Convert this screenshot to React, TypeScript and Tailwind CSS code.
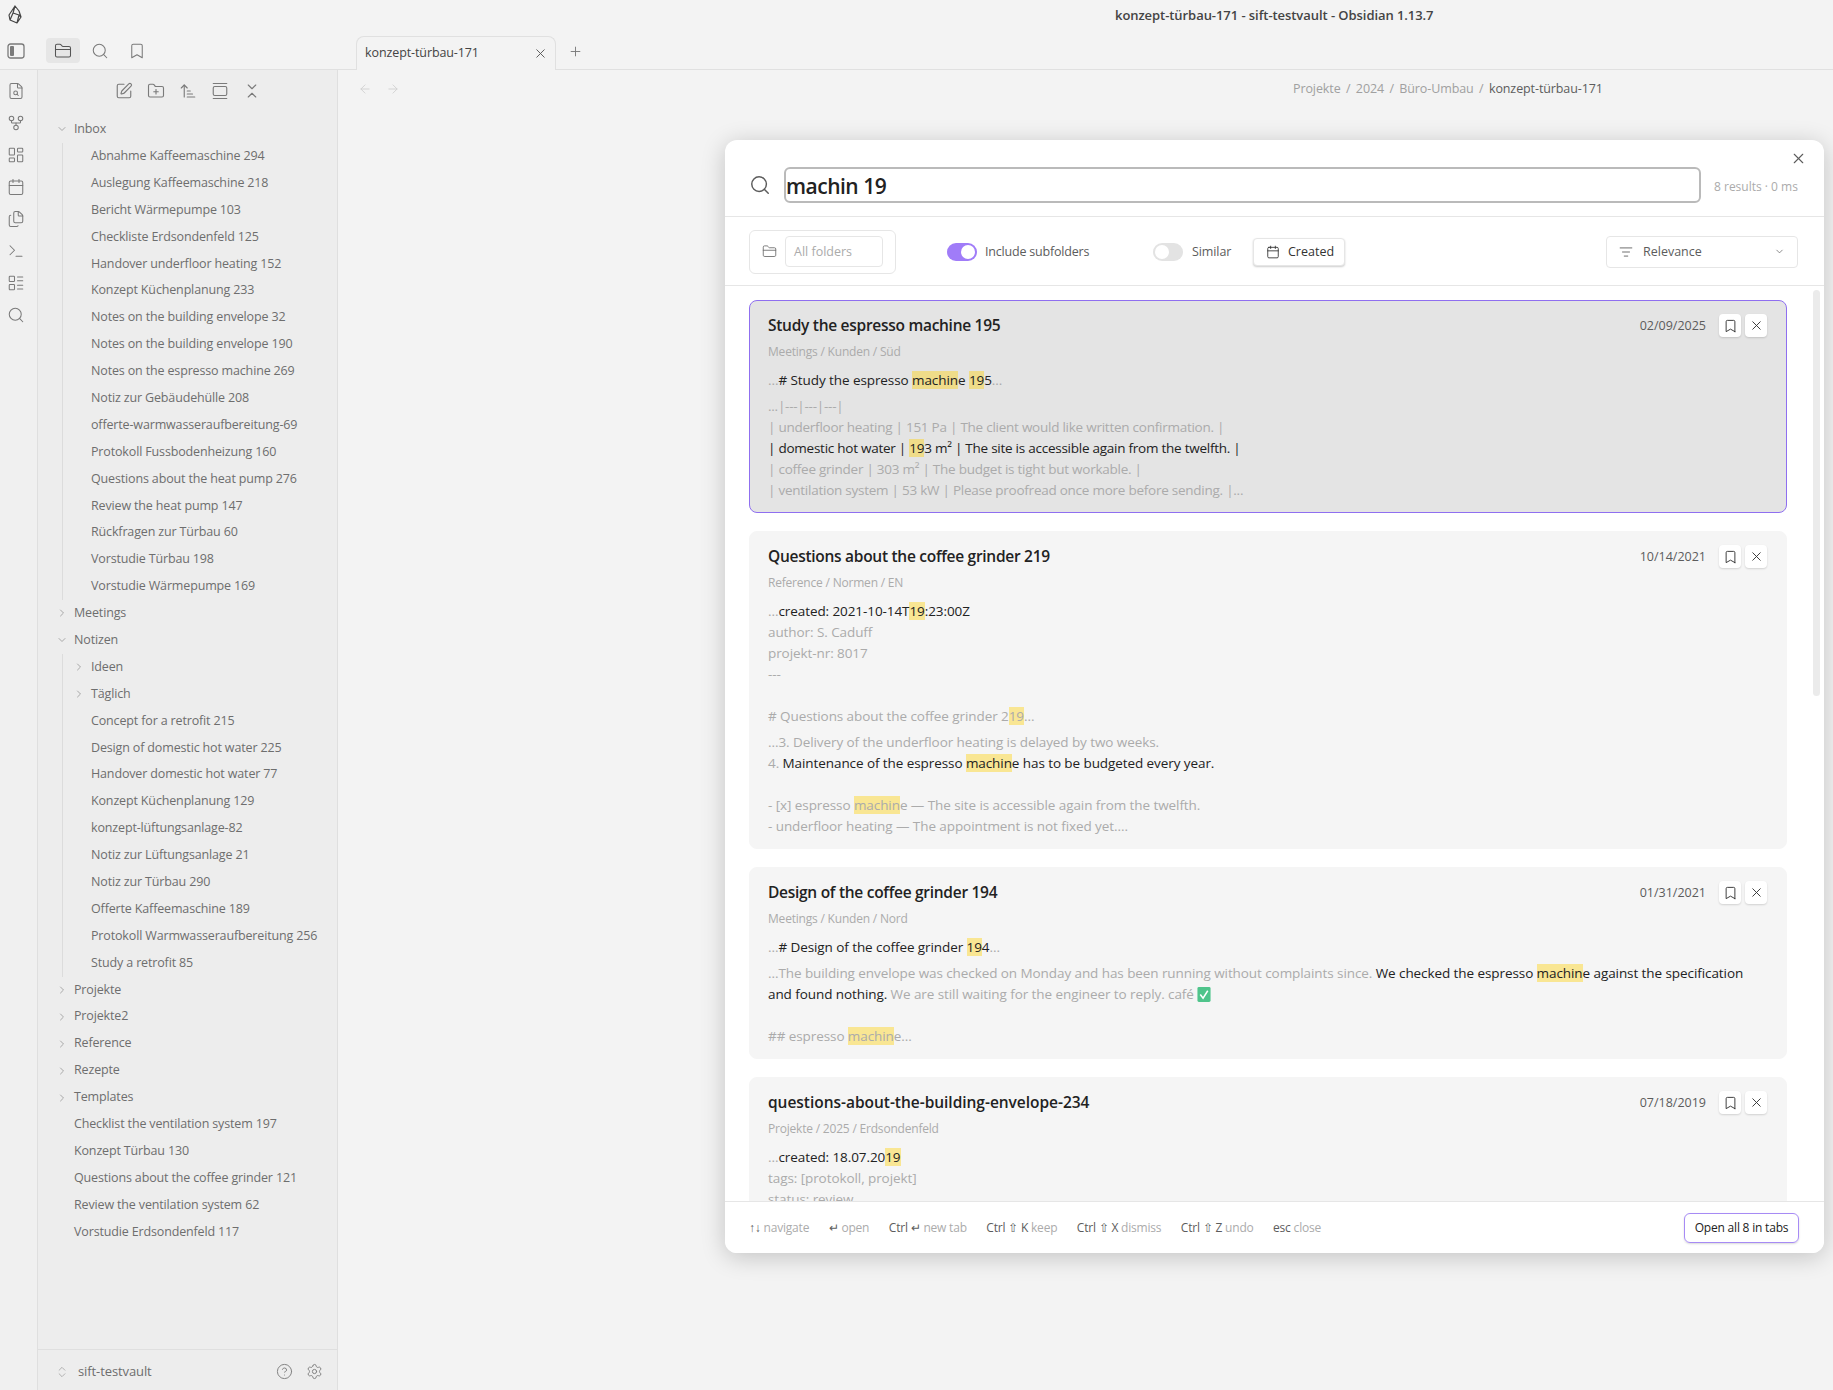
import {
  ArrowLeft, ArrowRight, ArrowUpNarrowWide, Bookmark, Calendar, ChevronDown, ChevronRight, ChevronsDownUp,
  ChevronsUpDown, CircleHelp, FileSearch, Files, FolderClosed, FolderPlus, GalleryVertical, GitFork,
  LayoutDashboard, LayoutList, ListFilter, Plus, Search, Settings, SquarePen, Terminal, X,
} from "lucide-react";
import type { ReactNode } from "react";

const font = { fontFamily: '"Open Sans", "Noto Sans", sans-serif' };

function Folder({ name, open, nested }: { name: string; open?: boolean; nested?: boolean }) {
  const Icon = open ? ChevronDown : ChevronRight;
  return (
    <div className={`flex items-center h-[26.9px] text-[12.5px] tracking-[-0.15px] text-[#6e6e6e] ${nested ? "pl-[35px]" : "pl-[18px]"}`}>
      <Icon className="w-3 h-3 text-[#a8a8a8] mr-[6px] shrink-0" strokeWidth={2} />
      <span>{name}</span>
    </div>
  );
}

function Note({ name, top }: { name: string; top?: boolean }) {
  return (
    <div className={`flex items-center h-[26.9px] text-[12.5px] tracking-[-0.15px] text-[#6e6e6e] whitespace-nowrap ${top ? "pl-[36px]" : "pl-[53px]"}`}>
      {name}
    </div>
  );
}

const inbox = [
  "Abnahme Kaffeemaschine 294", "Auslegung Kaffeemaschine 218", "Bericht Wärmepumpe 103", "Checkliste Erdsondenfeld 125",
  "Handover underfloor heating 152", "Konzept Küchenplanung 233", "Notes on the building envelope 32",
  "Notes on the building envelope 190", "Notes on the espresso machine 269", "Notiz zur Gebäudehülle 208",
  "offerte-warmwasseraufbereitung-69", "Protokoll Fussbodenheizung 160", "Questions about the heat pump 276",
  "Review the heat pump 147", "Rückfragen zur Türbau 60", "Vorstudie Türbau 198", "Vorstudie Wärmepumpe 169",
];
const notizen = [
  "Concept for a retrofit 215", "Design of domestic hot water 225", "Handover domestic hot water 77", "Konzept Küchenplanung 129",
  "konzept-lüftungsanlage-82", "Notiz zur Lüftungsanlage 21", "Notiz zur Türbau 290", "Offerte Kaffeemaschine 189",
  "Protokoll Warmwasseraufbereitung 256", "Study a retrofit 85",
];

function Sidebar() {
  return (
    <div className="w-[300px] shrink-0 flex flex-col bg-[#ededed] border-r border-[#dfdfdf]">
      <div className="h-[46px] pb-[5px] flex items-center justify-center gap-[14px] text-[#7a7a7a]">
        <SquarePen className="w-[18px] h-[18px]" strokeWidth={1.5} />
        <FolderPlus className="w-[18px] h-[18px]" strokeWidth={1.5} />
        <ArrowUpNarrowWide className="w-[18px] h-[18px]" strokeWidth={1.5} />
        <GalleryVertical className="w-[18px] h-[18px]" strokeWidth={1.5} />
        <ChevronsDownUp className="w-[18px] h-[18px]" strokeWidth={1.5} />
      </div>
      <div className="flex-1 relative">
        <Folder name="Inbox" open />
        <div className="ml-[24px] border-l border-[#dcdcdc]">
          {inbox.map((n) => (
            <div key={n} className="-ml-[25px]"><Note name={n} /></div>
          ))}
        </div>
        <Folder name="Meetings" />
        <Folder name="Notizen" open />
        <div className="ml-[24px] border-l border-[#dcdcdc]">
          <div className="-ml-[25px]">
            <Folder name="Ideen" nested />
            <Folder name="Täglich" nested />
            {notizen.map((n) => <Note key={n} name={n} />)}
          </div>
        </div>
        {["Projekte", "Projekte2", "Reference", "Rezepte", "Templates"].map((n) => <Folder key={n} name={n} />)}
        {["Checklist the ventilation system 197", "Konzept Türbau 130", "Questions about the coffee grinder 121", "Review the ventilation system 62", "Vorstudie Erdsondenfeld 117"].map((n) => (
          <Note key={n} name={n} top />
        ))}
      </div>
      <div className="h-[41px] pt-[3px] border-t border-[#dfdfdf] flex items-center pl-[17px] pr-[14px] text-[#6e6e6e]">
        <ChevronsUpDown className="w-[14px] h-[14px] text-[#a8a8a8] mr-[9px]" strokeWidth={1.5} />
        <span className="text-[13px] flex-1 tracking-[-0.1px]">sift-testvault</span>
        <CircleHelp className="w-[17px] h-[17px] text-[#828282] mr-[13px]" strokeWidth={1.4} />
        <Settings className="w-[17px] h-[17px] text-[#828282]" strokeWidth={1.4} />
      </div>
    </div>
  );
}

function Ribbon() {
  const icons = [FileSearch, GitFork, LayoutDashboard, Calendar, Files, Terminal, LayoutList, Search];
  return (
    <div className="w-[38px] shrink-0 flex flex-col items-start gap-[14px] pt-[12px] pl-[7px] bg-[#f0f0f0] border-r border-[#dfdfdf] text-[#7a7a7a]">
      {icons.map((Icon, i) => (
        <Icon key={i} className="w-[18px] h-[18px]" strokeWidth={1.4} />
      ))}
    </div>
  );
}

const M = ({ children }: { children: ReactNode }) => <mark className="bg-[#ffd00066] text-inherit">{children}</mark>;
const D = ({ children }: { children: ReactNode }) => <span className="text-[#222222]">{children}</span>;

function Card({ title, path, date, active, children }: { title: ReactNode; path: string; date: string; active?: boolean; children: ReactNode }) {
  return (
    <div className={`shrink-0 rounded-lg pl-[18px] pr-[19px] border ${active ? "bg-[#e4e4e4] border-[#8f6ff0] pt-[13px] h-[213px]" : "bg-[#f5f5f5] border-[#f5f5f5] pt-[13px] pb-[6px]"}`}>
      <div className="flex items-center h-[24px]">
        <div className="flex-1 text-[15.5px] font-semibold text-[#222222] tracking-[-0.28px]">{title}</div>
        <div className="text-[12.5px] text-[#5c5c5c] mr-[13px] mt-[1px]">{date}</div>
        <div className="w-[22px] h-[23px] -mt-[1px] bg-white rounded shadow-[0_1px_2px_rgba(0,0,0,0.15)] flex items-center justify-center mr-[4px]">
          <Bookmark className="w-[15px] h-[16px] text-[#333333]" strokeWidth={1.5} />
        </div>
        <div className="w-[22px] h-[23px] -mt-[1px] bg-white rounded shadow-[0_1px_2px_rgba(0,0,0,0.15)] flex items-center justify-center">
          <X className="w-[15px] h-[15px] text-[#333333]" strokeWidth={1.5} />
        </div>
      </div>
      <div className="text-[12px] text-[#ababab] h-[17px] leading-[17px] mt-[5px] tracking-[-0.2px]">{path}</div>
      <div className="mt-[10px] text-[13.5px] leading-[21px] text-[#ababab] tracking-[-0.08px]">{children}</div>
    </div>
  );
}

const Para = ({ children }: { children: ReactNode }) => <div className="mb-[5px] whitespace-pre-wrap">{children}</div>;

function Results() {
  return (
    <div className="flex-1 min-h-0 relative overflow-hidden pl-[24px] pt-[14px] flex flex-col gap-[18px] pr-[37px]">
      <Card title="Study the espresso machine 195" path="Meetings / Kunden / Süd" date="02/09/2025" active>
        <Para><span>...</span><D># Study the espresso <M>machin</M>e <M>19</M>5</D>...</Para>
        <div className="tracking-[-0.25px]">
          <Para>...|---|---|---|{"\n"}| underfloor heating | 151 Pa | The client would like written confirmation. |{"\n"}<D>| domestic hot water | <M>19</M>3 m² | The site is accessible again from the twelfth. |</D>{"\n"}| coffee grinder | 303 m² | The budget is tight but workable. |{"\n"}| ventilation system | 53 kW | Please proofread once more before sending. |...</Para>
        </div>
      </Card>
      <Card title="Questions about the coffee grinder 219" path="Reference / Normen / EN" date="10/14/2021">
        <Para>...<D>created: 2021-10-14T<M>19</M>:23:00Z</D>{"\n"}author: S. Caduff{"\n"}projekt-nr: 8017{"\n"}---{"\n"}{"\n"}# Questions about the coffee grinder 2<M>19</M>...</Para>
        <Para>...3. Delivery of the underfloor heating is delayed by two weeks.{"\n"}4. <D>Maintenance of the espresso <M>machin</M>e has to be budgeted every year.</D>{"\n"}{"\n"}- [x] espresso <M>machin</M>e — The site is accessible again from the twelfth.{"\n"}- underfloor heating — The appointment is not fixed yet....</Para>
      </Card>
      <Card title="Design of the coffee grinder 194" path="Meetings / Kunden / Nord" date="01/31/2021">
        <Para>...<D># Design of the coffee grinder <M>19</M>4</D>...</Para>
        <Para>...The building envelope was checked on Monday and has been running without complaints since. <D>We checked the espresso <M>machin</M>e against the specification and found nothing.</D> We are still waiting for the engineer to reply. café <svg viewBox="0 0 14 16" className="inline w-[14px] h-[15px] align-[-3px]"><rect width="14" height="16" rx="1.5" fill="#4fc48b" /><path d="M3 8l3 4 5-8" fill="none" stroke="#ffffff" strokeWidth="1.6" /></svg>{"\n"}{"\n"}## espresso <M>machin</M>e...</Para>
      </Card>
      <Card title={<span className="tracking-[-0.03px]">questions-about-the-building-envelope-234</span>} path="Projekte / 2025 / Erdsondenfeld" date="07/18/2019">
        <Para>...<D>created: 18.07.20<M>19</M></D>{"\n"}tags: [protokoll, projekt]{"\n"}status: review</Para>
      </Card>
      <div className="absolute right-[4px] top-[4px] w-[7px] h-[406px] rounded bg-[#ebebeb]" />
    </div>
  );
}

function Hint({ keys, label }: { keys: string; label: string }) {
  return (
    <span className="whitespace-nowrap">
      <span className="text-[#5c5c5c]">{keys}</span> <span className="text-[#ababab]">{label}</span>
    </span>
  );
}

function Modal() {
  return (
    <div className="absolute left-[725px] top-[140px] w-[1099px] h-[1113px] bg-white rounded-xl shadow-[0_4px_24px_rgba(0,0,0,0.2)] flex flex-col overflow-hidden">
      <div className="relative h-[77px] shrink-0 border-b border-[#e6e6e6] flex items-center pl-[24px] pr-[25px] pt-[14px]">
        <Search className="w-[22px] h-[22px] text-[#5c5c5c] mr-[13px] shrink-0" strokeWidth={1.6} />
        <div className="w-[917px] h-[36px] border-2 border-[#bababa] rounded-md flex items-center pt-[3px] text-[21px] font-semibold text-[#222222] tracking-[-0.5px]">machin 19</div>
        <div className="ml-[13px] text-[12px] text-[#ababab] whitespace-nowrap pt-[3px]">8 results · 0 ms</div>
        <X className="absolute right-[17px] top-[10px] w-[17px] h-[17px] text-[#5c5c5c]" strokeWidth={1.6} />
      </div>
      <div className="h-[69px] shrink-0 pt-[1px] border-b border-[#e6e6e6] flex items-center pl-[24px] pr-[26px] text-[12.5px] text-[#5c5c5c]">
        <div className="w-[147px] h-[44px] border border-[#e6e6e6] rounded-md flex items-center pl-[12px]">
          <FolderClosed className="w-[15px] h-[15px] text-[#6e6e6e] mr-[8px]" strokeWidth={1.4} />
          <div className="w-[98px] h-[31px] pt-[2px] border border-[#e6e6e6] rounded flex items-center pl-[8px] text-[#ababab]">All folders</div>
        </div>
        <div className="ml-[51px] w-[30px] h-[18px] rounded-full bg-[#a07cf8] flex items-center justify-end pr-[2px]">
          <div className="w-[14px] h-[14px] bg-white rounded-full" />
        </div>
        <span className="ml-[8px] w-[168px] pt-[2px] tracking-[-0.2px]">Include subfolders</span>
        <div className="w-[30px] h-[18px] rounded-full bg-[#e3e3e3] flex items-center pl-[2px]">
          <div className="w-[14px] h-[14px] bg-white rounded-full" />
        </div>
        <span className="ml-[9px] w-[61px] pt-[2px] tracking-[-0.1px]">Similar</span>
        <div className="w-[92px] h-[28px] rounded bg-white border border-[#e6e6e6] shadow-[0_1px_2px_rgba(0,0,0,0.2)] flex items-center pl-[12px] text-[#333333]">
          <Calendar className="w-[14px] h-[14px] mr-[8px]" strokeWidth={1.5} />
          <span className="pt-[2px]">Created</span>
        </div>
        <div className="ml-auto w-[192px] h-[32px] border border-[#e6e6e6] rounded flex items-center pl-[12px] pr-[12px]">
          <ListFilter className="w-[14px] h-[14px] mr-[10px]" strokeWidth={1.5} />
          <span className="flex-1 pt-[2px]">Relevance</span>
          <ChevronDown className="w-[11px] h-[11px]" strokeWidth={1.5} />
        </div>
      </div>
      <Results />
      <div className="h-[52px] shrink-0 border-t border-[#e6e6e6] bg-white flex items-center pl-[24px] pr-[25px] gap-[19.5px] text-[12px] tracking-[-0.2px]">
        <Hint keys="↑↓" label="navigate" />
        <Hint keys="↵" label="open" />
        <Hint keys="Ctrl ↵" label="new tab" />
        <Hint keys="Ctrl ⇧ K" label="keep" />
        <Hint keys="Ctrl ⇧ X" label="dismiss" />
        <Hint keys="Ctrl ⇧ Z" label="undo" />
        <Hint keys="esc" label="close" />
        <div className="ml-auto w-[115px] h-[30px] border border-[#a78bf5] rounded-md flex items-center justify-center text-[12px] text-[#222222] shadow-[0_1px_2px_rgba(0,0,0,0.15)]">Open all 8 in tabs</div>
      </div>
    </div>
  );
}

export default function App() {
  return (
    <div className="relative w-[1833px] h-[1390px] overflow-hidden bg-[#f3f3f3] flex flex-col" style={font}>
      <div className="h-[36px] pb-[4px] shrink-0 flex items-center">
        <svg viewBox="4 4 24 24" className="w-[24px] h-[24px] ml-[4px] text-[#444444]" fill="none" stroke="currentColor" strokeWidth="1.2" strokeLinejoin="round">
          <path d="M15 6 19 11 21 17 17 23 10 20 9 15ZM15 6 13 13 10 20M13 13 19 15 17 23M19 15 21 17" />
        </svg>
        <div className="ml-[1087px] text-[13px] font-semibold text-[#444444] tracking-[-0.06px]">konzept-türbau-171 - sift-testvault - Obsidian 1.13.7</div>
      </div>
      <div className="h-[34px] shrink-0 flex items-end border-b border-[#e0e0e0]">
        <div className="w-[356px] shrink-0 h-full pb-[4px] flex items-center text-[#7a7a7a]">
          <svg viewBox="0 0 18 18" className="w-[18px] h-[18px] ml-[7px]" fill="none" stroke="currentColor" strokeWidth="1.3">
            <rect x="1" y="2" width="16" height="14" rx="2.5" />
            <rect x="3" y="4" width="4" height="10" rx="1" fill="currentColor" stroke="none" />
          </svg>
          <div className="ml-[21px] w-[34px] h-[25px] rounded bg-[#e6e6e6] flex items-center justify-center text-[#555555]">
            <FolderClosed className="w-[18px] h-[18px]" strokeWidth={1.4} />
          </div>
          <Search className="w-[18px] h-[18px] ml-[11px]" strokeWidth={1.4} />
          <Bookmark className="w-[18px] h-[18px] ml-[19px]" strokeWidth={1.4} />
        </div>
        <div className="w-[200px] h-[34px] -mb-px rounded-t-lg border border-b-0 border-[#e0e0e0] bg-[#f3f3f3] flex items-center pl-[8px] pr-[7px] text-[12.5px] text-[#444444] tracking-[-0.1px]">
          <span className="flex-1">konzept-türbau-171</span>
          <X className="w-[15px] h-[15px] text-[#555555] -mt-[1px]" strokeWidth={1.5} />
        </div>
        <Plus className="w-[15px] h-[15px] ml-[12px] mb-[10px] text-[#7a7a7a]" strokeWidth={1.5} />
      </div>
      <div className="flex-1 min-h-0 flex">
        <Ribbon />
        <Sidebar />
        <div className="flex-1">
          <div className="h-[38px] flex items-center pl-[20px] relative">
            <ArrowLeft className="w-[14px] h-[14px] text-[#cfcfcf]" strokeWidth={1.5} />
            <ArrowRight className="w-[14px] h-[14px] ml-[14px] text-[#cfcfcf]" strokeWidth={1.5} />
            <div className="ml-[893px] text-[12.5px] text-[#a0a0a0] flex gap-[5.4px] tracking-[-0.1px] whitespace-nowrap">
              <span>Projekte</span><span>/</span><span>2024</span><span>/</span><span>Büro-Umbau</span><span>/</span><span className="text-[#5c5c5c]">konzept-türbau-171</span>
            </div>
          </div>
        </div>
      </div>
      <Modal />
    </div>
  );
}
